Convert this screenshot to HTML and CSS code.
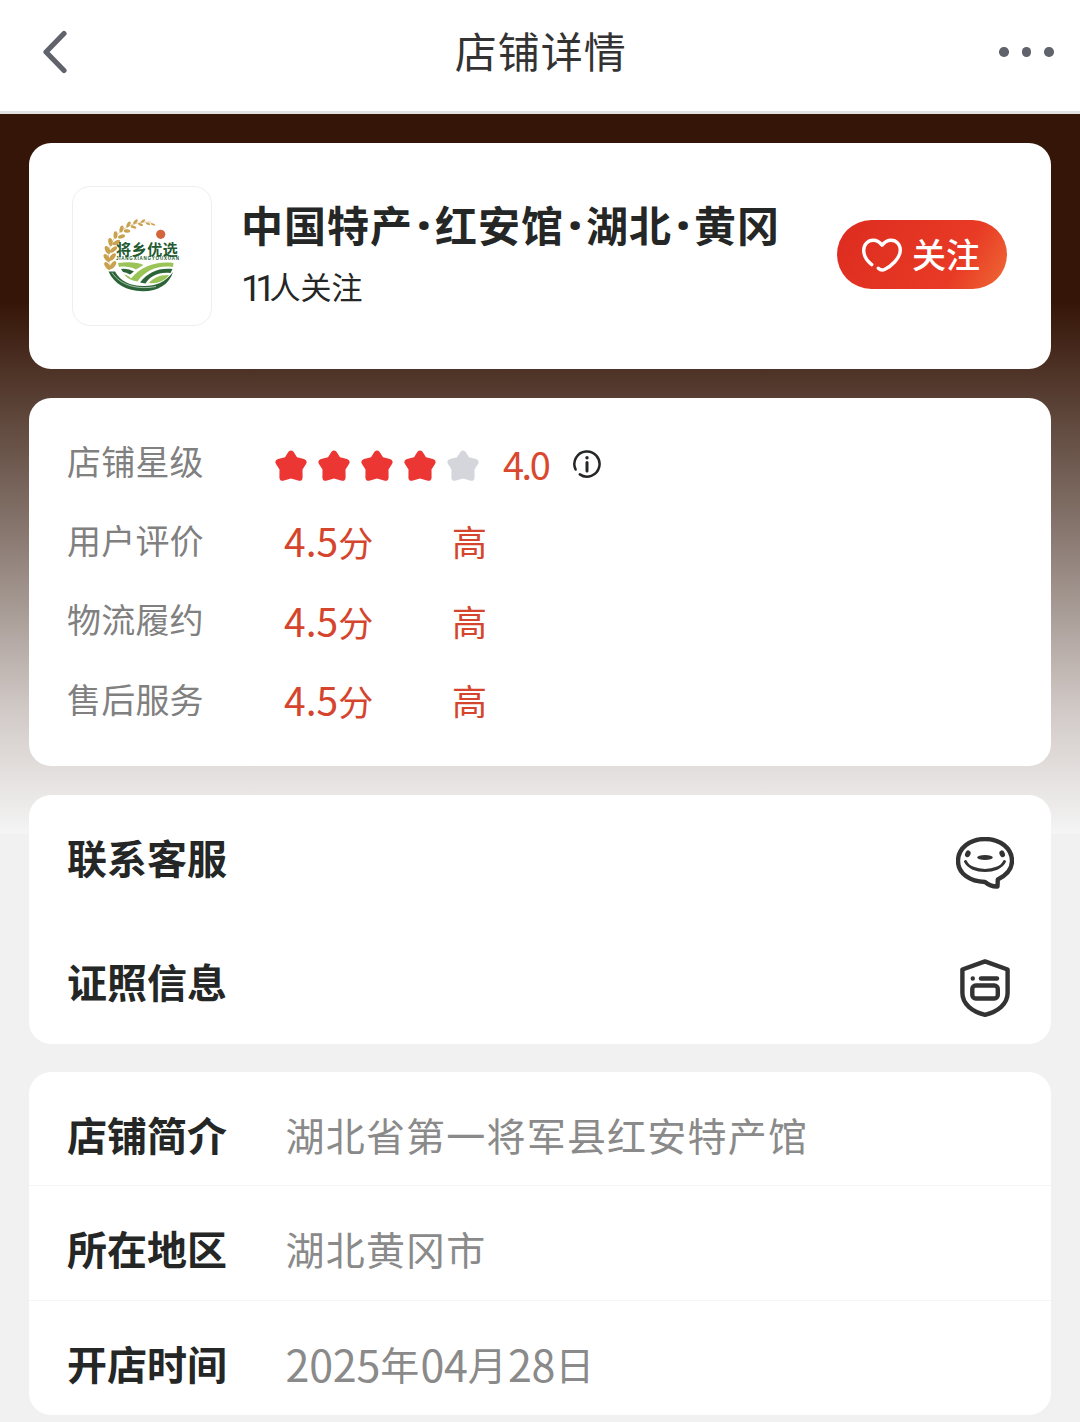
FILE: index.html
```html
<!DOCTYPE html>
<html lang="zh-CN">

<head>
    <meta charset="UTF-8">
    <meta name="viewport" content="width=device-width, initial-scale=1.0">
    <title>店铺详情</title>
    <link rel="stylesheet" href="styles.css">
</head>

<body>
    <header class="navbar">
        <svg class="back" viewBox="0 0 26 44"><path d="M22 3.500 L4 22 L22 40.500"/></svg>
        <h1 class="navbar-title">店铺详情</h1>
        <div class="more"><i></i><i></i><i></i></div>
    </header>

    <main class="page">
        <!-- Shop header -->
        <section class="card shop">
            <div class="shop-logo">
                <svg viewBox="0 0 84 84">
                    <path class="stem" d="M10 55 C3 32 20 9 51 10"/>
                    <g class="wheat">
                        <ellipse cx="7.500" cy="54" rx="2.300" ry="4.500" transform="rotate(-35 7.500 54)"/>
                        <ellipse cx="13" cy="53" rx="2.300" ry="4.500" transform="rotate(35 13 53)"/>
                        <ellipse cx="6.800" cy="46" rx="2.300" ry="4.500" transform="rotate(-35 6.800 46)"/>
                        <ellipse cx="12.500" cy="45" rx="2.200" ry="4.500" transform="rotate(40 12.500 45)"/>
                        <ellipse cx="7.500" cy="38" rx="2.300" ry="4.300" transform="rotate(-25 7.500 38)"/>
                        <ellipse cx="13.500" cy="37.500" rx="2.100" ry="4.300" transform="rotate(50 13.500 37.500)"/>
                        <ellipse cx="10.500" cy="30" rx="2.200" ry="4" transform="rotate(-12 10.500 30)"/>
                        <ellipse cx="16.500" cy="30.500" rx="2" ry="4" transform="rotate(62 16.500 30.500)"/>
                        <ellipse cx="15.500" cy="23" rx="2" ry="3.800" transform="rotate(2 15.500 23)"/>
                        <ellipse cx="21.500" cy="24.500" rx="1.900" ry="3.600" transform="rotate(75 21.500 24.500)"/>
                        <ellipse cx="21.500" cy="17" rx="1.900" ry="3.500" transform="rotate(15 21.500 17)"/>
                        <ellipse cx="27" cy="19" rx="1.700" ry="3.300" transform="rotate(95 27 19)"/>
                        <ellipse cx="28.500" cy="12.500" rx="1.700" ry="3.200" transform="rotate(30 28.500 12.500)"/>
                        <ellipse cx="33.500" cy="15" rx="1.400" ry="3" transform="rotate(105 33.500 15)"/>
                        <ellipse cx="35.500" cy="9.800" rx="1.400" ry="3" transform="rotate(45 35.500 9.800)"/>
                        <ellipse cx="40.500" cy="12.500" rx="1.200" ry="2.600" transform="rotate(110 40.500 12.500)"/>
                        <ellipse cx="43" cy="9" rx="1.200" ry="2.600" transform="rotate(60 43 9)"/>
                        <ellipse cx="48" cy="11.800" rx="1" ry="2.200" transform="rotate(110 48 11.800)"/>
                        <ellipse cx="53" cy="12.300" rx=".9" ry="2.600" transform="rotate(110 53 12.300)"/>
                    </g>
                    <circle cx="60.700" cy="22.300" r="4.600" fill="#d3643b"/>
                    <text class="logo-name" x="16" y="42.500">将乡优选</text>
                    <text class="logo-pinyin" x="16" y="47.800" textLength="63">JIANGXIANGYOUXUAN</text>
                    <path fill="#9ac358" d="M18 51 C28 49.500 38 50 43.500 53 L36 57.500 C30 54.500 24 54 19 55 Z"/>
                    <path fill="#2c6437" d="M21 57 Q28 56 34 59.500 L30 62.500 Q26 60 23 60 Z"/>
                    <path fill="#9ac358" d="M24 62.500 C28 63 30 65 31 66.500 C41 54 57 49 73.500 51 L73 55 C57 53 45 59 37.500 69.500 C31 68.500 27 66 24 62.500 Z"/>
                    <path fill="#2c6437" d="M40 70.500 C48 60 59 55.500 72.500 57 L70.500 61 C59 59.500 50 64 45.500 71.500 Z"/>
                    <path fill="#9ac358" d="M49 71 C53 66 60 62.500 69 63 C64 69.500 57 72 49 71 Z"/>
                    <path fill="#2c6437" d="M8.500 59.500 L15 59.500 C20 69 30 74 43 74 C54 74.500 65 71 73 60 C69 73 57 79.800 42 79.300 C27 79 14 72 8.500 59.500 Z"/>
                    <path fill="none" stroke="#fff" stroke-width=".6" d="M12 60.500 C20 73 37 78 56 74.500"/>
                </svg>
            </div>
            <div class="shop-info">
                <h2 class="shop-name">中国特产<b>·</b>红安馆<b>·</b>湖北<b>·</b>黄冈</h2>
                <p class="fans"><b>11</b>人关注</p>
            </div>
            <button class="follow">
                <svg viewBox="0 0 40 34"><path d="M9.700 26.600 C4.500 22.500 1.700 18 1.700 12.500 C1.700 6.500 5.800 2.200 11.200 2.200 C15 2.200 17.800 4 20.100 7.200 C22.500 4 25.500 2.200 29 2.200 C34.500 2.200 38.300 6.500 38.300 12 C38.300 20.500 29 28.300 22.500 31.500 C20 32.700 18 31.800 16.300 30.200"/></svg>
                <span>关注</span>
            </button>
        </section>

        <!-- Ratings -->
        <section class="card scores">
            <div class="score-row">
                <span class="score-label">店铺星级</span>
                <div class="stars">
                    <svg viewBox="0 0 32 31"><path d="M13.500 1.800 Q16 -1 18.500 1.800 L22 7.300 L29 9 Q33 10.500 31 14 L27.500 19.500 L27.600 27.500 Q27.300 31.800 23 30.600 L16 28.500 L9 30.600 Q4.700 31.800 4.400 27.500 L4.500 19.500 L1 14 Q-1 10.500 3 9 L10 7.300 Z"/></svg>
                    <svg viewBox="0 0 32 31"><path d="M13.500 1.800 Q16 -1 18.500 1.800 L22 7.300 L29 9 Q33 10.500 31 14 L27.500 19.500 L27.600 27.500 Q27.300 31.800 23 30.600 L16 28.500 L9 30.600 Q4.700 31.800 4.400 27.500 L4.500 19.500 L1 14 Q-1 10.500 3 9 L10 7.300 Z"/></svg>
                    <svg viewBox="0 0 32 31"><path d="M13.500 1.800 Q16 -1 18.500 1.800 L22 7.300 L29 9 Q33 10.500 31 14 L27.500 19.500 L27.600 27.500 Q27.300 31.800 23 30.600 L16 28.500 L9 30.600 Q4.700 31.800 4.400 27.500 L4.500 19.500 L1 14 Q-1 10.500 3 9 L10 7.300 Z"/></svg>
                    <svg viewBox="0 0 32 31"><path d="M13.500 1.800 Q16 -1 18.500 1.800 L22 7.300 L29 9 Q33 10.500 31 14 L27.500 19.500 L27.600 27.500 Q27.300 31.800 23 30.600 L16 28.500 L9 30.600 Q4.700 31.800 4.400 27.500 L4.500 19.500 L1 14 Q-1 10.500 3 9 L10 7.300 Z"/></svg>
                    <svg class="empty" viewBox="0 0 32 31"><path d="M13.500 1.800 Q16 -1 18.500 1.800 L22 7.300 L29 9 Q33 10.500 31 14 L27.500 19.500 L27.600 27.500 Q27.300 31.800 23 30.600 L16 28.500 L9 30.600 Q4.700 31.800 4.400 27.500 L4.500 19.500 L1 14 Q-1 10.500 3 9 L10 7.300 Z"/></svg>
                </div>
                <span class="star-score">4.0</span>
                <svg class="info" viewBox="0 0 28 28">
                    <path d="M2.600 19.500 A12.600 12.600 0 1 1 6.800 24.400"/>
                    <path class="info-stem" d="M14 12.500 V21"/>
                    <circle cx="14" cy="7.800" r="1.700"/>
                </svg>
            </div>
            <div class="score-row">
                <span class="score-label">用户评价</span>
                <span class="score"><em>4.5</em>分</span>
                <span class="level">高</span>
            </div>
            <div class="score-row">
                <span class="score-label">物流履约</span>
                <span class="score"><em>4.5</em>分</span>
                <span class="level">高</span>
            </div>
            <div class="score-row">
                <span class="score-label">售后服务</span>
                <span class="score"><em>4.5</em>分</span>
                <span class="level">高</span>
            </div>
        </section>

        <!-- Links -->
        <section class="card links">
            <div class="link-row">
                <span class="label">联系客服</span>
                <svg class="icon-chat" viewBox="0 0 58 52">
                    <path class="line" d="M41.500 49.500 L41.800 42.500 C51 38 56 31.500 56 24 C56 11.500 44.500 2 29 2 C13.500 2 2 11.500 2 24 C2 36.500 14 44.700 29 45 C32 47.500 36 49.800 41.500 49.500 Z"/>
                    <path class="smile" d="M9.500 24.500 C15 36.500 43 36.500 48.500 24.500"/>
                    <ellipse cx="11.800" cy="16.800" rx="2.600" ry="3.500" transform="rotate(25 11.800 16.800)"/>
                    <ellipse cx="46.200" cy="16.800" rx="2.600" ry="3.500" transform="rotate(-25 46.200 16.800)"/>
                    <ellipse cx="29" cy="20.500" rx="7.800" ry="2.500"/>
                </svg>
            </div>
            <div class="link-row">
                <span class="label">证照信息</span>
                <svg class="icon-license" viewBox="0 0 50 58">
                    <path class="line" d="M25 2.400 L47.600 10.500 V34 C47.600 45 38 52.500 25 55.800 C12 52.500 2.400 45 2.400 34 V10.500 Z"/>
                    <rect class="line" x="12.300" y="26.500" width="25.500" height="13" rx="3.500"/>
                    <path class="line bar" d="M21 19.500 H37"/>
                    <circle cx="12.800" cy="19.500" r="2.200"/>
                </svg>
            </div>
        </section>

        <!-- Basic info -->
        <section class="card detail">
            <div class="detail-row">
                <span class="label">店铺简介</span>
                <span class="value">湖北省第一将军县红安特产馆</span>
            </div>
            <div class="detail-row">
                <span class="label">所在地区</span>
                <span class="value">湖北黄冈市</span>
            </div>
            <div class="detail-row">
                <span class="label">开店时间</span>
                <span class="value"><em>2025</em>年<em>04</em>月<em>28</em>日</span>
            </div>
        </section>
    </main>
</body>

</html>
```
FILE: styles.css
```css
* {
    box-sizing: border-box;
}

body {
    margin: 0;
    background: #f1f1f1;
    color: #252726;
    font-family: "Noto Sans CJK SC", sans-serif;
}

h1,
h2,
p {
    margin: 0;
}

em {
    font-style: normal;
}

svg {
    display: block;
    flex: none;
}

.navbar {
    display: flex;
    justify-content: space-between;
    align-items: center;
    height: 114px;
    padding: 0 26px 7px 42px;
    background: #fff;
    border-bottom: 3px solid #e3e1e0;
}

.back {
    width: 26px;
    height: 44px;
    fill: none;
    stroke: #60626c;
    stroke-width: 5.200;
    stroke-linecap: round;
    stroke-linejoin: round;
}

.navbar-title {
    font-size: 42px;
    font-weight: 400;
    line-height: 60px;
    letter-spacing: 1px;
    color: #333;
    margin-left: 14px;
    padding-bottom: 4px;
}

.more {
    display: flex;
    gap: 13px;
}

.more i {
    width: 9.500px;
    height: 9.500px;
    border-radius: 50%;
    background: #60626c;
}

.page {
    display: flex;
    flex-direction: column;
    gap: 28.500px;
    padding: 29px 29px 7px;
    background: linear-gradient(#351507 0, #351507 188px, #887870 420px, #cfc7c4 590px, #f5f5f5 720px) no-repeat 0 0 / 100% 720px;
}

.card {
    background: #fff;
    border-radius: 22px;
}

.shop {
    display: flex;
    align-items: flex-start;
    height: 226px;
    padding: 43px 44px 0 43px;
}

.shop-logo {
    width: 140px;
    height: 140px;
    padding: 25px 27px;
    border: 1px solid #eee;
    border-radius: 18px;
}

.shop-logo svg {
    width: 84px;
    height: 84px;
}

.stem {
    fill: none;
    stroke: #d9b878;
    stroke-width: .7;
}

.wheat {
    fill: #c9a250;
}

.logo-name {
    font-size: 15px;
    font-weight: 700;
    letter-spacing: .6px;
    fill: #1f5a30;
}

.logo-pinyin {
    font-family: "Liberation Sans", sans-serif;
    font-size: 4.500px;
    font-weight: 700;
    fill: #1f5a30;
}

.shop-info {
    flex: 1;
    margin-left: 29px;
}

.shop-name {
    font-size: 42px;
    font-weight: 700;
    line-height: 60px;
    letter-spacing: 1px;
    margin-top: 8px;
    white-space: nowrap;
}

.shop-name b {
    display: inline-block;
    width: 22px;
    font-family: "Noto Sans", sans-serif;
    font-size: 46px;
    line-height: 1;
    letter-spacing: 0;
    text-align: center;
}

.fans {
    font-size: 31px;
    line-height: 44px;
    margin-top: 10px;
}

.fans b {
    font-family: Roboto, sans-serif;
    font-size: 37px;
    font-weight: 400;
    line-height: 1;
    letter-spacing: -6.500px;
    vertical-align: -2px;
}

.follow {
    display: flex;
    align-items: center;
    width: 170px;
    height: 69px;
    margin-top: 34px;
    padding: 0 0 0 25px;
    border: 0;
    border-radius: 35px;
    background: linear-gradient(120deg, #dd2c20, #e83a25 70%, #ef6a35);
    color: #fff;
    font-family: inherit;
    font-size: 34px;
    font-weight: 500;
}

.follow svg {
    width: 40px;
    height: 34px;
    margin-right: 10px;
    fill: none;
    stroke: #fff;
    stroke-width: 3.400;
    stroke-linecap: round;
    stroke-linejoin: round;
}

.follow span {
    padding-bottom: 2px;
}

.scores {
    height: 368.500px;
    padding: 26px 38px 0;
}

.score-row {
    display: flex;
    align-items: center;
    height: 79.300px;
}

.score-label {
    width: 208px;
    padding-bottom: 6px;
    font-size: 34px;
    letter-spacing: .2px;
    color: #808080;
}

.stars {
    display: flex;
    gap: 11px;
    margin-top: 4px;
}

.stars svg {
    width: 32px;
    height: 31px;
    fill: #ec3634;
}

.stars .empty {
    fill: #d5d6dc;
}

.star-score {
    width: 70px;
    margin: 1px 0 0 24px;
    font-size: 38px;
    letter-spacing: -2.500px;
    color: #d9482f;
}

.info {
    width: 28px;
    height: 28px;
    margin-top: 1px;
    fill: #252726;
}

.info path {
    fill: none;
    stroke: #252726;
    stroke-width: 2.500;
    stroke-linecap: round;
}

.info .info-stem {
    stroke-width: 3;
}

.score {
    width: 168px;
    margin-left: 9px;
    padding-bottom: 4px;
    font-size: 35px;
    color: #d5452e;
}

.score em {
    font-size: 39px;
}

.level {
    padding-bottom: 3px;
    font-size: 35px;
    color: #d5452e;
}

.links {
    height: 249px;
    padding: 3px 37px 0 38px;
}

.link-row {
    display: flex;
    justify-content: space-between;
    align-items: center;
    height: 124.500px;
}

.label {
    font-size: 40px;
    font-weight: 700;
    line-height: 60px;
}

.link-row .label {
    padding-bottom: 6px;
}

.icon-chat {
    width: 58px;
    height: 52px;
    margin-top: 7px;
    fill: #333;
}

.icon-license {
    width: 50px;
    height: 58px;
    margin: 8px 4px 0 0;
    fill: #333;
}

.line,
.smile {
    fill: none;
    stroke: #333;
    stroke-width: 4.400;
    stroke-linejoin: round;
}

.smile {
    stroke-width: 3;
    stroke-linecap: round;
}

.bar {
    stroke-linecap: round;
}

.detail-row {
    display: flex;
    align-items: center;
    height: 114.300px;
    padding: 11px 38px 0;
    border-bottom: 1px solid #f5f5f5;
}

.detail-row:last-child {
    border-bottom: 0;
}

.value {
    margin-left: 58.500px;
    font-size: 39px;
    line-height: 60px;
    letter-spacing: 1.200px;
    color: #8a8a8a;
}

.value em {
    font-size: 43px;
    line-height: 1;
    letter-spacing: -.2px;
    vertical-align: -2px;
}
```
